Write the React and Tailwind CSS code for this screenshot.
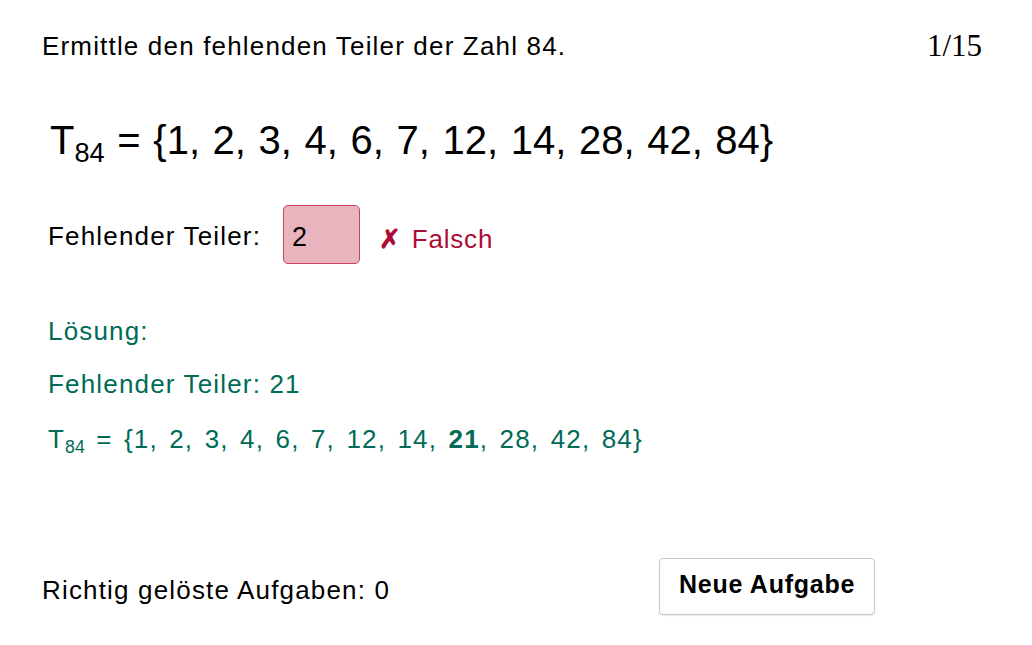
import React from "react";

const sans = "font-['Liberation_Sans',Arial,sans-serif]";

function Sub({ children, className = "" }) {
  return <span className={`relative top-[0.28em] text-[0.68em] tracking-normal ${className}`}>{children}</span>;
}

export default function App() {
  const list = ["1", "2", "3", "4", "6", "7", "12", "14", "28", "42", "84"];
  const solution = ["1", "2", "3", "4", "6", "7", "12", "14", "21", "28", "42", "84"];

  return (
    <div className={`w-[1032px] h-[645px] bg-white text-black px-[42px] ${sans}`}>
      {/* Header */}
      <div className="flex justify-between items-center pt-[31px] text-[26px] leading-[30px] tracking-[0.045em]">
        <span>Ermittle den fehlenden Teiler der Zahl 84.</span>
        <span className="font-['Liberation_Serif',serif] text-[31px] tracking-normal mr-[8px]">1/15</span>
      </div>

      {/* Divisor set */}
      <div className="mt-[55px] ml-[8px] text-[40px] leading-[48px] whitespace-nowrap [word-spacing:1.5px]">
        T<Sub>84</Sub> = {"{"}
        {list.join(", ")}
        {"}"}
      </div>

      {/* Input row */}
      <div className="mt-[36px] ml-[6px] flex items-center text-[26px] tracking-[0.045em]">
        <span className="mt-[3px]">Fehlender Teiler:</span>
        <div className="ml-[22px] w-[77px] h-[59px] rounded-[5px] border border-[#cc3f63] bg-[#e8b4be] flex items-center pl-[8px] text-[27px] pt-[6px]">
          2
        </div>
        <span className="ml-[19px] mt-[10px] text-[#ad0c34] tracking-[0.03em] flex items-center">
          <span className="font-bold mr-[10px]">✗</span>Falsch
        </span>
      </div>

      {/* Solution */}
      <div className="ml-[6px] text-[#006b56] text-[26px] leading-[30px] tracking-[0.045em]">
        <div className="mt-[52px]">Lösung:</div>
        <div className="mt-[23px]">Fehlender Teiler: 21</div>
        <div className="mt-[25px] whitespace-nowrap [word-spacing:3px]">
          T<Sub>84</Sub> = {"{"}
          {solution.map((n, i) => (
            <React.Fragment key={n}>
              {n === "21" ? <b>21</b> : n}
              {i < solution.length - 1 ? ", " : ""}
            </React.Fragment>
          ))}
          {"}"}
        </div>
      </div>

      {/* Footer */}
      <div className="mt-[101px] w-[833px] flex items-center justify-between text-[26px] tracking-[0.045em]">
        <span className="mt-[7px]">Richtig gelöste Aufgaben: 0</span>
        <button className="w-[216px] h-[57px] rounded-[4px] border border-[#c8c8c8] bg-white font-bold text-[25px] tracking-[0.03em] pb-[4px] shadow-[0_1px_1px_rgba(0,0,0,0.08)]">
          Neue Aufgabe
        </button>
      </div>
    </div>
  );
}
